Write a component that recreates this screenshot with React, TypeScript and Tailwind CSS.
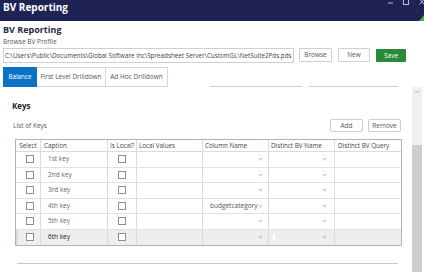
import React from "react";

const Chevron = () => (
  <svg width="5" height="4" viewBox="0 0 5 4" className="shrink-0">
    <path d="M0.8 1.2 L2.5 2.8 L4.2 1.2" fill="none" stroke="#8c8c8c" strokeWidth="0.8" />
  </svg>
);

const Box = () => <div className="w-[8px] h-[8px] border border-[#8f8f8f] bg-white" />;

const rows = [
  { caption: "1st key", col: "" },
  { caption: "2nd key", col: "" },
  { caption: "3rd key", col: "" },
  { caption: "4th key", col: "budgetcategory" },
  { caption: "5th key", col: "" },
  { caption: "6th key", col: "" },
];

export default function App() {
  return (
    <div className="w-[424px] h-[272px] overflow-hidden bg-white font-['Open_Sans','Noto_Sans',sans-serif] flex flex-col">
      {/* Title bar */}
      <div className="h-[21px] shrink-0 bg-[#1f2354] flex items-start">
        <span className="text-white font-bold text-[10px] leading-[13px] pt-[1px] pl-[3px]">BV Reporting</span>
        <svg width="40" height="21" viewBox="0 0 40 21" className="ml-auto">
          <line x1="4" y1="3" x2="9" y2="3" stroke="#b9bdd0" strokeWidth="1" />
          <rect x="19.5" y="-3" width="5" height="7.5" fill="none" stroke="#b9bdd0" strokeWidth="1" />
          <line x1="35.5" y1="-1" x2="40.5" y2="4.5" stroke="#b9bdd0" strokeWidth="1" />
          <line x1="40.5" y1="-1" x2="35.5" y2="4.5" stroke="#b9bdd0" strokeWidth="1" />
          <polygon points="40,15 40,21 35,21" fill="#3db54a" />
        </svg>
      </div>

      {/* Header */}
      <div className="px-[3px] shrink-0">
        <div className="mt-[3px] text-[9px] leading-[12px] font-bold text-[#1f2a44]">BV Reporting</div>
        <div className="mt-[1px] text-[6.5px] leading-[9px] text-[#555]">Browse BV Profile</div>
        <div className="mt-[2px] flex items-start">
          <div className="w-[291px] h-[15px] border border-[#cfcfcf] flex items-center pl-[1px] overflow-hidden whitespace-nowrap text-[6.3px] text-[#444]">
            C:\Users\Public\Documents\Global Software Inc\Spreadsheet Server\CustomGL\NetSuite2Pds.pds
          </div>
          <div className="ml-[5px] w-[33px] h-[14px] border border-[#cfcfcf] rounded-[1px] flex items-center justify-center text-[6.5px] text-[#555]">Browse</div>
          <div className="ml-[6px] w-[32px] h-[14px] border border-[#cfcfcf] rounded-[1px] flex items-center justify-center text-[6.5px] text-[#555]">New</div>
          <div className="ml-[6px] mt-[1px] w-[30px] h-[13px] bg-[#2a8a3c] rounded-[1px] flex items-center justify-center text-[6.5px] text-white">Save</div>
        </div>
        <div className="mt-[4px] flex items-end h-[20px]">
          <div className="w-[34px] h-[20px] bg-[#0b73c6] flex items-center justify-center text-[6.3px] text-white">Balance</div>
          <div className="w-[69px] h-[20px] border border-l-0 border-[#d6d6d6] flex items-center justify-center text-[6.5px] text-[#555]">First Level Drilldown</div>
          <div className="w-[62px] h-[20px] border border-l-0 border-[#d6d6d6] flex items-center justify-center text-[6.5px] text-[#555]">Ad Hoc Drilldown</div>
          <div className="ml-[42px] w-[92px] h-px bg-[#c9d3de]" />
          <div className="ml-[7px] w-[89px] h-px bg-[#c9d3de]" />
        </div>
      </div>

      {/* Main */}
      <div className="flex flex-1 min-h-0">
        <div className="w-[412px] pl-[12px] pr-[11px]">
          <div className="mt-[13px] text-[8px] leading-[11px] font-bold text-[#222]">Keys</div>
          <div className="mt-[8px] flex items-center h-[13px]">
            <span className="ml-[1px] text-[6.5px] text-[#555]">List of Keys</span>
            <div className="ml-auto w-[33px] h-[13px] border border-[#cfcfcf] rounded-[2px] flex items-center justify-center text-[6.5px] text-[#555]">Add</div>
            <div className="ml-[5px] w-[33px] h-[13px] border border-[#cfcfcf] rounded-[2px] flex items-center justify-center text-[6.5px] text-[#555]">Remove</div>
          </div>

          {/* Table */}
          <div className="mt-[7px] ml-[3px] w-[387px] border border-[#a5b6cc]">
            <div className="grid grid-cols-[25px_67px_29px_66px_66px_66px_66px] h-[12px] border-b border-[#dcdcdc] text-[6.3px] text-[#444] leading-[11px]">
              <div className="border-r border-[#dcdcdc] flex justify-center">Select</div>
              <div className="border-r border-[#dcdcdc] pl-[3px]">Caption</div>
              <div className="border-r border-[#dcdcdc] pl-[2px]">Is Local?</div>
              <div className="border-r border-[#dcdcdc] pl-[2px]">Local Values</div>
              <div className="border-r border-[#dcdcdc] pl-[2px]">Column Name</div>
              <div className="border-r border-[#dcdcdc] pl-[2px]">Distinct BV Name</div>
              <div className="pl-[3px]">Distinct BV Query</div>
            </div>
            {rows.map((r, i) => {
              const last = i === rows.length - 1;
              return (
                <div
                  key={r.caption}
                  className={
                    "grid grid-cols-[25px_67px_29px_66px_66px_66px_66px] h-[15.5px] text-[6.5px] relative " +
                    (last ? "bg-[#eeeeee]" : "border-b border-[#e2e2e2]")
                  }
                >
                  {last && <div className="absolute left-0 top-0 bottom-0 w-[2px] bg-[#cfdcec]" />}
                  <div className="border-r border-[#dcdcdc] flex items-center justify-center pl-[3px]"><Box /></div>
                  <div className={"border-r border-[#dcdcdc] flex items-center pl-[7px] " + (last ? "text-[#222]" : "text-[#666]")}>{r.caption}</div>
                  <div className="border-r border-[#dcdcdc] flex items-center justify-center"><Box /></div>
                  <div className="border-r border-[#dcdcdc]" />
                  <div className="border-r border-[#dcdcdc] flex items-center pl-[7px] pr-[5px] text-[#555]">
                    <span>{r.col}</span>
                    <span className="ml-auto"><Chevron /></span>
                  </div>
                  <div className="border-r border-[#dcdcdc] flex items-center pl-[4px] pr-[7px]">
                    {last && <div className="w-[2px] h-[6px] bg-white" />}
                    <span className="ml-auto"><Chevron /></span>
                  </div>
                  <div />
                </div>
              );
            })}
          </div>

          <div className="mt-[17px] ml-[5px] w-[381px] h-px bg-[#c8c8c8]" />
        </div>

        {/* Scrollbar */}
        <div className="w-[10px] flex flex-col bg-[#f0f0f0]">
          <div className="h-[58px] flex justify-center pt-[3px]">
            <svg width="6" height="4" viewBox="0 0 6 4">
              <path d="M1 3 L3 1 L5 3" fill="none" stroke="#a8a8a8" strokeWidth="0.8" />
            </svg>
          </div>
          <div className="flex-1 bg-[#cdcdcd]" />
        </div>
        <div className="w-[2px] bg-white" />
      </div>
    </div>
  );
}
